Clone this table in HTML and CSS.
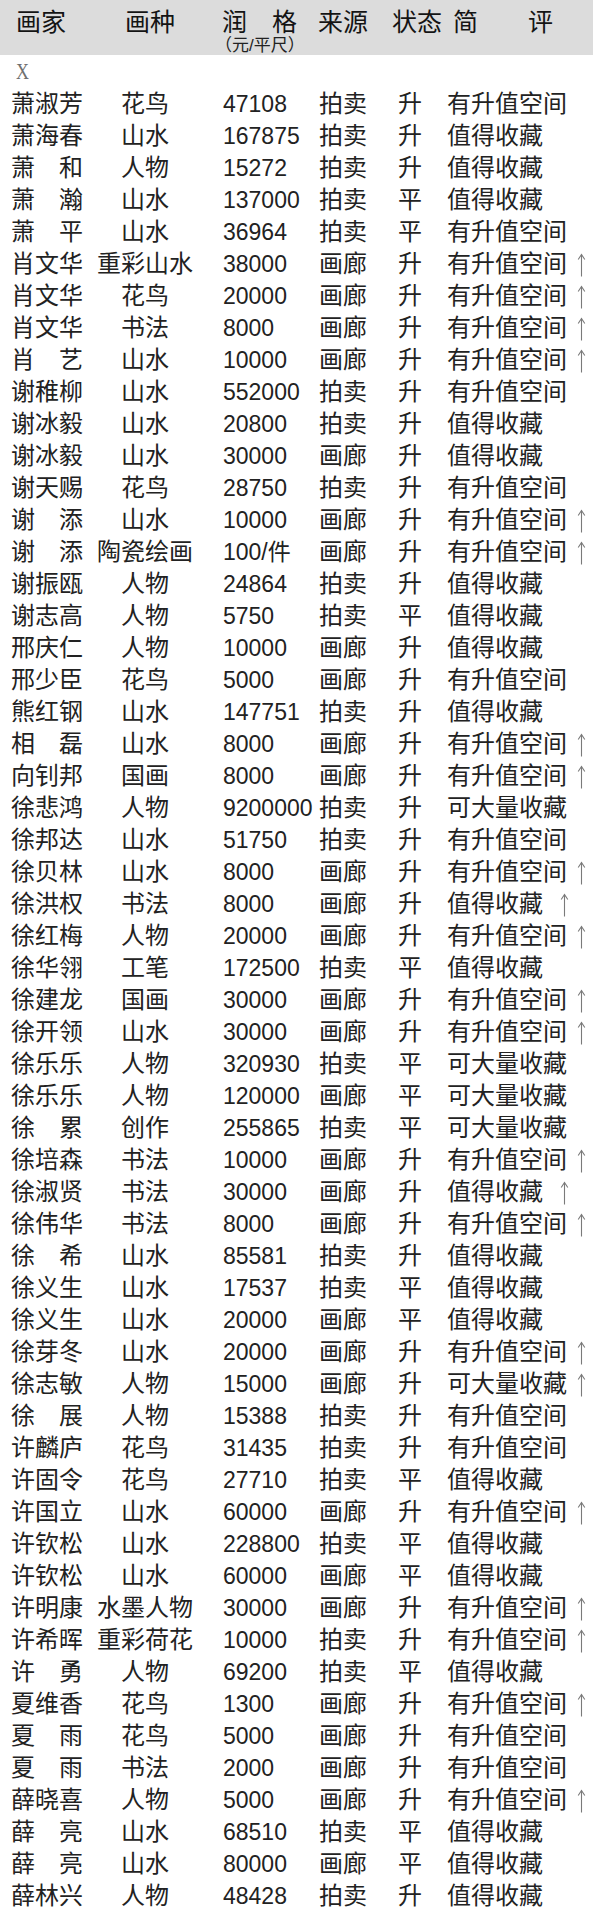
FILE: index.html
```html
<!DOCTYPE html>
<html lang="zh-CN">
<head>
<meta charset="utf-8">
<title>画家润格表</title>
<link rel="stylesheet" href="styles.css">
</head>
<body>
<div class="head">
  <div class="hc">画家</div>
  <div class="hc">画种</div>
  <div class="hc"><div class="price-head"><span>润　格</span><span class="unit">（元/平尺）</span></div></div>
  <div class="hc">来源</div>
  <div class="hc">状态</div>
  <div class="hc">简　　评</div>
</div>
<div class="letter"><span class="x">X</span></div>
<div class="rows">
<div class="row"><span>萧淑芳</span><span class="genre">花鸟</span><span class="price">47108</span><span>拍卖</span><span>升</span><span>有升值空间</span></div>
<div class="row"><span>萧海春</span><span class="genre">山水</span><span class="price">167875</span><span>拍卖</span><span>升</span><span>值得收藏</span></div>
<div class="row"><span>萧　和</span><span class="genre">人物</span><span class="price">15272</span><span>拍卖</span><span>升</span><span>值得收藏</span></div>
<div class="row"><span>萧　瀚</span><span class="genre">山水</span><span class="price">137000</span><span>拍卖</span><span>平</span><span>值得收藏</span></div>
<div class="row"><span>萧　平</span><span class="genre">山水</span><span class="price">36964</span><span>拍卖</span><span>平</span><span>有升值空间</span></div>
<div class="row"><span>肖文华</span><span class="genre">重彩山水</span><span class="price">38000</span><span>画廊</span><span>升</span><span>有升值空间<svg class="up" viewBox="0 0 9 24"><path d="M4.5 23.5V1.5M1.2 6.5L4.5 1.5L7.8 6.5"/></svg></span></div>
<div class="row"><span>肖文华</span><span class="genre">花鸟</span><span class="price">20000</span><span>画廊</span><span>升</span><span>有升值空间<svg class="up" viewBox="0 0 9 24"><path d="M4.5 23.5V1.5M1.2 6.5L4.5 1.5L7.8 6.5"/></svg></span></div>
<div class="row"><span>肖文华</span><span class="genre">书法</span><span class="price">8000</span><span>画廊</span><span>升</span><span>有升值空间<svg class="up" viewBox="0 0 9 24"><path d="M4.5 23.5V1.5M1.2 6.5L4.5 1.5L7.8 6.5"/></svg></span></div>
<div class="row"><span>肖　艺</span><span class="genre">山水</span><span class="price">10000</span><span>画廊</span><span>升</span><span>有升值空间<svg class="up" viewBox="0 0 9 24"><path d="M4.5 23.5V1.5M1.2 6.5L4.5 1.5L7.8 6.5"/></svg></span></div>
<div class="row"><span>谢稚柳</span><span class="genre">山水</span><span class="price">552000</span><span>拍卖</span><span>升</span><span>有升值空间</span></div>
<div class="row"><span>谢冰毅</span><span class="genre">山水</span><span class="price">20800</span><span>拍卖</span><span>升</span><span>值得收藏</span></div>
<div class="row"><span>谢冰毅</span><span class="genre">山水</span><span class="price">30000</span><span>画廊</span><span>升</span><span>值得收藏</span></div>
<div class="row"><span>谢天赐</span><span class="genre">花鸟</span><span class="price">28750</span><span>拍卖</span><span>升</span><span>有升值空间</span></div>
<div class="row"><span>谢　添</span><span class="genre">山水</span><span class="price">10000</span><span>画廊</span><span>升</span><span>有升值空间<svg class="up" viewBox="0 0 9 24"><path d="M4.5 23.5V1.5M1.2 6.5L4.5 1.5L7.8 6.5"/></svg></span></div>
<div class="row"><span>谢　添</span><span class="genre">陶瓷绘画</span><span class="price">100/件</span><span>画廊</span><span>升</span><span>有升值空间<svg class="up" viewBox="0 0 9 24"><path d="M4.5 23.5V1.5M1.2 6.5L4.5 1.5L7.8 6.5"/></svg></span></div>
<div class="row"><span>谢振瓯</span><span class="genre">人物</span><span class="price">24864</span><span>拍卖</span><span>升</span><span>值得收藏</span></div>
<div class="row"><span>谢志高</span><span class="genre">人物</span><span class="price">5750</span><span>拍卖</span><span>平</span><span>值得收藏</span></div>
<div class="row"><span>邢庆仁</span><span class="genre">人物</span><span class="price">10000</span><span>画廊</span><span>升</span><span>值得收藏</span></div>
<div class="row"><span>邢少臣</span><span class="genre">花鸟</span><span class="price">5000</span><span>画廊</span><span>升</span><span>有升值空间</span></div>
<div class="row"><span>熊红钢</span><span class="genre">山水</span><span class="price">147751</span><span>拍卖</span><span>升</span><span>值得收藏</span></div>
<div class="row"><span>相　磊</span><span class="genre">山水</span><span class="price">8000</span><span>画廊</span><span>升</span><span>有升值空间<svg class="up" viewBox="0 0 9 24"><path d="M4.5 23.5V1.5M1.2 6.5L4.5 1.5L7.8 6.5"/></svg></span></div>
<div class="row"><span>向钊邦</span><span class="genre">国画</span><span class="price">8000</span><span>画廊</span><span>升</span><span>有升值空间<svg class="up" viewBox="0 0 9 24"><path d="M4.5 23.5V1.5M1.2 6.5L4.5 1.5L7.8 6.5"/></svg></span></div>
<div class="row"><span>徐悲鸿</span><span class="genre">人物</span><span class="price">9200000</span><span>拍卖</span><span>升</span><span>可大量收藏</span></div>
<div class="row"><span>徐邦达</span><span class="genre">山水</span><span class="price">51750</span><span>拍卖</span><span>升</span><span>有升值空间</span></div>
<div class="row"><span>徐贝林</span><span class="genre">山水</span><span class="price">8000</span><span>画廊</span><span>升</span><span>有升值空间<svg class="up" viewBox="0 0 9 24"><path d="M4.5 23.5V1.5M1.2 6.5L4.5 1.5L7.8 6.5"/></svg></span></div>
<div class="row"><span>徐洪权</span><span class="genre">书法</span><span class="price">8000</span><span>画廊</span><span>升</span><span>值得收藏<svg class="up wide" viewBox="0 0 9 24"><path d="M4.5 23.5V1.5M1.2 6.5L4.5 1.5L7.8 6.5"/></svg></span></div>
<div class="row"><span>徐红梅</span><span class="genre">人物</span><span class="price">20000</span><span>画廊</span><span>升</span><span>有升值空间<svg class="up" viewBox="0 0 9 24"><path d="M4.5 23.5V1.5M1.2 6.5L4.5 1.5L7.8 6.5"/></svg></span></div>
<div class="row"><span>徐华翎</span><span class="genre">工笔</span><span class="price">172500</span><span>拍卖</span><span>平</span><span>值得收藏</span></div>
<div class="row"><span>徐建龙</span><span class="genre">国画</span><span class="price">30000</span><span>画廊</span><span>升</span><span>有升值空间<svg class="up" viewBox="0 0 9 24"><path d="M4.5 23.5V1.5M1.2 6.5L4.5 1.5L7.8 6.5"/></svg></span></div>
<div class="row"><span>徐开领</span><span class="genre">山水</span><span class="price">30000</span><span>画廊</span><span>升</span><span>有升值空间<svg class="up" viewBox="0 0 9 24"><path d="M4.5 23.5V1.5M1.2 6.5L4.5 1.5L7.8 6.5"/></svg></span></div>
<div class="row"><span>徐乐乐</span><span class="genre">人物</span><span class="price">320930</span><span>拍卖</span><span>平</span><span>可大量收藏</span></div>
<div class="row"><span>徐乐乐</span><span class="genre">人物</span><span class="price">120000</span><span>画廊</span><span>平</span><span>可大量收藏</span></div>
<div class="row"><span>徐　累</span><span class="genre">创作</span><span class="price">255865</span><span>拍卖</span><span>平</span><span>可大量收藏</span></div>
<div class="row"><span>徐培森</span><span class="genre">书法</span><span class="price">10000</span><span>画廊</span><span>升</span><span>有升值空间<svg class="up" viewBox="0 0 9 24"><path d="M4.5 23.5V1.5M1.2 6.5L4.5 1.5L7.8 6.5"/></svg></span></div>
<div class="row"><span>徐淑贤</span><span class="genre">书法</span><span class="price">30000</span><span>画廊</span><span>升</span><span>值得收藏<svg class="up wide" viewBox="0 0 9 24"><path d="M4.5 23.5V1.5M1.2 6.5L4.5 1.5L7.8 6.5"/></svg></span></div>
<div class="row"><span>徐伟华</span><span class="genre">书法</span><span class="price">8000</span><span>画廊</span><span>升</span><span>有升值空间<svg class="up" viewBox="0 0 9 24"><path d="M4.5 23.5V1.5M1.2 6.5L4.5 1.5L7.8 6.5"/></svg></span></div>
<div class="row"><span>徐　希</span><span class="genre">山水</span><span class="price">85581</span><span>拍卖</span><span>升</span><span>值得收藏</span></div>
<div class="row"><span>徐义生</span><span class="genre">山水</span><span class="price">17537</span><span>拍卖</span><span>平</span><span>值得收藏</span></div>
<div class="row"><span>徐义生</span><span class="genre">山水</span><span class="price">20000</span><span>画廊</span><span>平</span><span>值得收藏</span></div>
<div class="row"><span>徐芽冬</span><span class="genre">山水</span><span class="price">20000</span><span>画廊</span><span>升</span><span>有升值空间<svg class="up" viewBox="0 0 9 24"><path d="M4.5 23.5V1.5M1.2 6.5L4.5 1.5L7.8 6.5"/></svg></span></div>
<div class="row"><span>徐志敏</span><span class="genre">人物</span><span class="price">15000</span><span>画廊</span><span>升</span><span>可大量收藏<svg class="up" viewBox="0 0 9 24"><path d="M4.5 23.5V1.5M1.2 6.5L4.5 1.5L7.8 6.5"/></svg></span></div>
<div class="row"><span>徐　展</span><span class="genre">人物</span><span class="price">15388</span><span>拍卖</span><span>升</span><span>有升值空间</span></div>
<div class="row"><span>许麟庐</span><span class="genre">花鸟</span><span class="price">31435</span><span>拍卖</span><span>升</span><span>有升值空间</span></div>
<div class="row"><span>许固令</span><span class="genre">花鸟</span><span class="price">27710</span><span>拍卖</span><span>平</span><span>值得收藏</span></div>
<div class="row"><span>许国立</span><span class="genre">山水</span><span class="price">60000</span><span>画廊</span><span>升</span><span>有升值空间<svg class="up" viewBox="0 0 9 24"><path d="M4.5 23.5V1.5M1.2 6.5L4.5 1.5L7.8 6.5"/></svg></span></div>
<div class="row"><span>许钦松</span><span class="genre">山水</span><span class="price">228800</span><span>拍卖</span><span>平</span><span>值得收藏</span></div>
<div class="row"><span>许钦松</span><span class="genre">山水</span><span class="price">60000</span><span>画廊</span><span>平</span><span>值得收藏</span></div>
<div class="row"><span>许明康</span><span class="genre">水墨人物</span><span class="price">30000</span><span>画廊</span><span>升</span><span>有升值空间<svg class="up" viewBox="0 0 9 24"><path d="M4.5 23.5V1.5M1.2 6.5L4.5 1.5L7.8 6.5"/></svg></span></div>
<div class="row"><span>许希晖</span><span class="genre">重彩荷花</span><span class="price">10000</span><span>拍卖</span><span>升</span><span>有升值空间<svg class="up" viewBox="0 0 9 24"><path d="M4.5 23.5V1.5M1.2 6.5L4.5 1.5L7.8 6.5"/></svg></span></div>
<div class="row"><span>许　勇</span><span class="genre">人物</span><span class="price">69200</span><span>拍卖</span><span>平</span><span>值得收藏</span></div>
<div class="row"><span>夏维香</span><span class="genre">花鸟</span><span class="price">1300</span><span>画廊</span><span>升</span><span>有升值空间<svg class="up" viewBox="0 0 9 24"><path d="M4.5 23.5V1.5M1.2 6.5L4.5 1.5L7.8 6.5"/></svg></span></div>
<div class="row"><span>夏　雨</span><span class="genre">花鸟</span><span class="price">5000</span><span>画廊</span><span>升</span><span>有升值空间</span></div>
<div class="row"><span>夏　雨</span><span class="genre">书法</span><span class="price">2000</span><span>画廊</span><span>升</span><span>有升值空间</span></div>
<div class="row"><span>薛晓喜</span><span class="genre">人物</span><span class="price">5000</span><span>画廊</span><span>升</span><span>有升值空间<svg class="up" viewBox="0 0 9 24"><path d="M4.5 23.5V1.5M1.2 6.5L4.5 1.5L7.8 6.5"/></svg></span></div>
<div class="row"><span>薛　亮</span><span class="genre">山水</span><span class="price">68510</span><span>拍卖</span><span>平</span><span>值得收藏</span></div>
<div class="row"><span>薛　亮</span><span class="genre">山水</span><span class="price">80000</span><span>画廊</span><span>平</span><span>值得收藏</span></div>
<div class="row"><span>薛林兴</span><span class="genre">人物</span><span class="price">48428</span><span>拍卖</span><span>升</span><span>值得收藏</span></div>
</div>
</body>
</html>
```
FILE: styles.css
```css
html, body {
  margin: 0;
  padding: 0;
  background: #ffffff;
}
body {
  width: 600px;
  font-family: "Liberation Sans", "Noto Sans CJK SC", sans-serif;
  color: #222222;
}
.head {
  box-sizing: border-box;
  width: 593px;
  height: 55px;
  background: #dcdcdc;
  padding: 7px 0 0 16px;
  display: grid;
  grid-template-columns: 109px 97px 96px 74px 61px 1fr;
  font-size: 25px;
  line-height: 30px;
  color: #141414;
}
.price-head {
  display: inline-flex;
  flex-direction: column;
  align-items: flex-start;
}
.unit {
  font-size: 17px;
  line-height: 18px;
  margin-top: 0;
  margin-left: -7px;
  color: #222222;
}
.letter {
  height: 33px;
  padding-left: 16px;
  line-height: 32px;
}
.x {
  display: inline-block;
  font-family: "Liberation Serif", serif;
  font-size: 24px;
  color: #707070;
  transform: scaleX(0.75);
  transform-origin: left center;
}
.row {
  display: grid;
  grid-template-columns: 86px 96px 126px 79px 49px 1fr;
  padding-left: 11px;
  height: 32px;
  line-height: 32px;
  font-size: 24px;
  white-space: nowrap;
}
.genre {
  text-align: center;
}
.price {
  padding-left: 30px;
  font-size: 23px;
}
.up {
  width: 9px;
  height: 24px;
  margin-left: 10px;
  vertical-align: -5px;
  fill: none;
  stroke: #7a7a7a;
  stroke-width: 1.1;
}
.up.wide {
  margin-left: 17px;
}
```
